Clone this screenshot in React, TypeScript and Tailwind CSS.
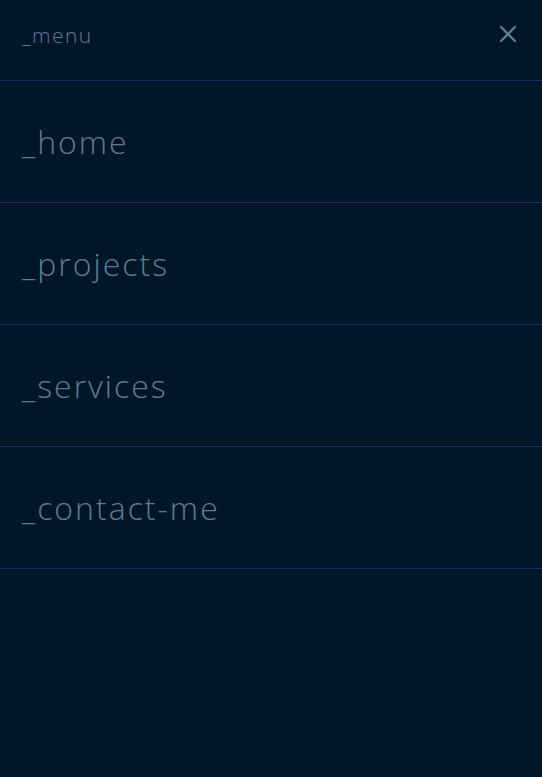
import { X } from "lucide-react";

const items = ["_home", "_projects", "_services", "_contact-me"];

export default function App() {
  return (
    <div className="w-full min-h-[777px] bg-[#011627] font-['Open_Sans',sans-serif] font-light text-[#607b96]">
      <header className="h-[81px] flex justify-between items-start pl-[22px] pr-[20px] pt-[21px] border-b border-[#1e2d5d]">
        <span className="text-[21px] leading-[28px] tracking-[1.4px]">_menu</span>
        <button className="mt-[-1px]">
          <X size={28} strokeWidth={2} />
        </button>
      </header>
      <nav className="flex flex-col">
        {items.map((item) => (
          <a
            key={item}
            href="#"
            className="h-[122px] flex items-center px-[22px] border-b border-[#1e2d5d] text-[32px] tracking-[2px]"
          >
            {item}
          </a>
        ))}
      </nav>
    </div>
  );
}
